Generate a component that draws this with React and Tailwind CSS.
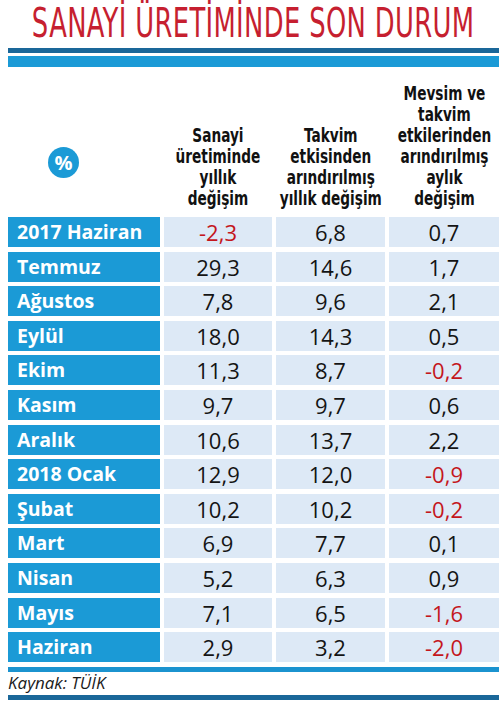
import React from 'react';

const rows = [
  ['2017 Haziran', '-2,3', '6,8', '0,7'],
  ['Temmuz', '29,3', '14,6', '1,7'],
  ['Ağustos', '7,8', '9,6', '2,1'],
  ['Eylül', '18,0', '14,3', '0,5'],
  ['Ekim', '11,3', '8,7', '-0,2'],
  ['Kasım', '9,7', '9,7', '0,6'],
  ['Aralık', '10,6', '13,7', '2,2'],
  ['2018 Ocak', '12,9', '12,0', '-0,9'],
  ['Şubat', '10,2', '10,2', '-0,2'],
  ['Mart', '6,9', '7,7', '0,1'],
  ['Nisan', '5,2', '6,3', '0,9'],
  ['Mayıs', '7,1', '6,5', '-1,6'],
  ['Haziran', '2,9', '3,2', '-2,0'],
];

const headers = [
  ['Sanayi', 'üretiminde', 'yıllık', 'değişim'],
  ['Takvim', 'etkisinden', 'arındırılmış', 'yıllık değişim'],
  ['Mevsim ve', 'takvim', 'etkilerinden', 'arındırılmış', 'aylık', 'değişim'],
];

const condensed = "font-['DejaVu_Sans_Condensed','Liberation_Sans_Narrow','DejaVu_Sans',sans-serif]";

const App = () => {
  return (
    <div className="w-[502px] h-[702px] bg-white font-['Open_Sans',sans-serif] overflow-hidden">
      {/* Title */}
      <div className="h-[48px] flex justify-center items-start pl-[4px]">
        <h1 className={`${condensed} text-[41px] leading-[46px] text-[#c61f30] whitespace-nowrap scale-x-[0.7] tracking-[0.5px]`}>
          SANAYİ ÜRETİMİNDE SON DURUM
        </h1>
      </div>

      <div className="ml-[8px] w-[491px]">
        <div className="h-[5px] bg-[#1a6799]" />
        <div className="h-[11px] mt-[3px] bg-[#1b9ad6]" />

        {/* Column headers */}
        <div className="grid grid-cols-[152px_108px_109px_110px] gap-x-[4px] h-[150px] items-end pb-[8px]">
          <div className="self-start mt-[80px] pl-[40px]">
            <div className="w-[31px] h-[31px] rounded-full bg-[#1b9ad6] text-white font-bold text-[20px] flex items-center justify-center">
              %
            </div>
          </div>
          {headers.map((lines, i) => (
            <div key={i} className="flex justify-center">
              <div className={`${condensed} font-bold text-[19px] leading-[21px] text-[#111] text-center whitespace-nowrap scale-x-[0.8]`}>
                {lines.map((l, j) => (
                  <div key={j}>{l}</div>
                ))}
              </div>
            </div>
          ))}
        </div>

        {/* Rows */}
        <div className="flex flex-col gap-[4.6px]">
          {rows.map((r, i) => (
            <div key={i} className="grid grid-cols-[152px_108px_109px_110px] gap-x-[4px] h-[30px]">
              <div className="bg-[#1b9ad6] text-white font-bold text-[19.5px] leading-[30px] pl-[9px] whitespace-nowrap">
                {r[0]}
              </div>
              {r.slice(1).map((v, j) => (
                <div
                  key={j}
                  className={`bg-[#dde9f6] text-[22px] leading-[30px] text-center ${v.startsWith('-') ? 'text-[#c4161c]' : 'text-[#141414]'}`}
                >
                  {v}
                </div>
              ))}
            </div>
          ))}
        </div>

        <div className="h-[5px] mt-[5px] bg-[#1b93cf]" />
        <div className="h-[23px] italic text-[17px] leading-[22px] text-[#1a1a1a]">Kaynak: TÜİK</div>
        <div className="h-[5px] bg-[#1a6799]" />
      </div>
    </div>
  );
};

export default App;
